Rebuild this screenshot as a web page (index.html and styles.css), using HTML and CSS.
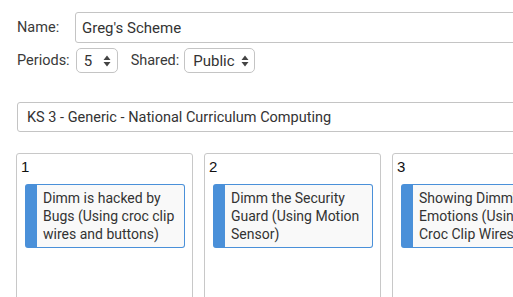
FILE: index.html
```html
<!DOCTYPE html>
<html>
<head>
<meta charset="utf-8">
<link rel="stylesheet" href="styles.css">
</head>
<body>
<div class="page">
  <div class="row row-name">
    <span class="label label-name">Name:</span>
    <div class="input input-name">Greg's Scheme</div>
  </div>
  <div class="row row-opts">
    <span class="label">Periods:</span>
    <div class="select select-periods"><span>5</span><svg class="arrows" width="8" height="12" viewBox="0 0 8 12"><path d="M4 0.5 L7.5 5 L0.5 5 Z M4 11.5 L7.5 7 L0.5 7 Z" fill="#444"/></svg></div>
    <span class="label label-shared">Shared:</span>
    <div class="select select-shared"><span>Public</span><svg class="arrows" width="8" height="12" viewBox="0 0 8 12"><path d="M4 0.5 L7.5 5 L0.5 5 Z M4 11.5 L7.5 7 L0.5 7 Z" fill="#444"/></svg></div>
  </div>
  <div class="input input-curr">KS 3 - Generic - National Curriculum Computing</div>
  <div class="cols">
    <div class="col">
      <div class="col-num">1</div>
      <div class="card">Dimm is hacked by Bugs (Using croc clip wires and buttons)</div>
    </div>
    <div class="col">
      <div class="col-num">2</div>
      <div class="card">Dimm the Security Guard (Using Motion Sensor)</div>
    </div>
    <div class="col">
      <div class="col-num">3</div>
      <div class="card">Showing Dimm's Emotions (Using<br>Croc Clip Wires)</div>
    </div>
  </div>
</div>
</body>
</html>
```

FILE: styles.css
```css
html, body {
  margin: 0;
  padding: 0;
  background: #fff;
  overflow: hidden;
  width: 513px;
  height: 297px;
}
body {
  font-family: Roboto, "Liberation Sans", sans-serif;
  color: #333;
  font-size: 14px;
}
.page {
  padding: 12px 0 0 16px;
}
.row {
  display: flex;
  align-items: center;
}
.row-name {
  height: 31px;
}
.label {
  font-size: 14.5px;
  color: #3a3a3a;
  margin-left: 1px;
}
.label-name {
  width: 58px;
  flex: none;
}
.input {
  box-sizing: border-box;
  border: 1px solid #c4c4c4;
  border-radius: 3px;
  background: #fff;
  display: flex;
  align-items: center;
  white-space: nowrap;
  flex: none;
}
.input-name {
  width: 480px;
  height: 31px;
  padding-left: 6px;
  font-size: 15px;
  color: #333;
}
.row-opts {
  margin-top: 5px;
  height: 25px;
}
.select {
  box-sizing: border-box;
  height: 25px;
  border: 1px solid #c4c4c4;
  border-radius: 5px;
  display: flex;
  align-items: center;
  justify-content: space-between;
  font-size: 15px;
  color: #333;
  flex: none;
}
.select-periods {
  width: 42px;
  margin-left: 6px;
  padding: 0 6px 0 7px;
}
.select-shared {
  width: 71px;
  margin-left: 5px;
  padding: 0 5px 0 8px;
}
.label-shared {
  margin-left: 13px;
}
.arrows {
  display: block;
}
.input-curr {
  margin-top: 29px;
  margin-left: 1px;
  width: 520px;
  height: 30px;
  padding-left: 9px;
  font-size: 14.5px;
}
.cols {
  margin-top: 21px;
  display: flex;
  gap: 11px;
}
.col {
  flex: none;
  box-sizing: border-box;
  width: 177px;
  height: 200px;
  border: 1px solid #c8c8c8;
  border-radius: 3px;
}
.col-num {
  font-family: "Liberation Sans", Arial, sans-serif;
  font-size: 15px;
  line-height: 18px;
  color: #111;
  padding: 4px 0 0 4px;
}
.card {
  margin: 8px 7px 0 8px;
  box-sizing: border-box;
  border: 1px solid #4a90d9;
  border-left: 12px solid #4a90d9;
  border-radius: 3px;
  background: #f9f9f9;
  padding: 4px 4px 4px 6px;
  font-size: 14px;
  line-height: 18px;
  color: #333;
}
```
